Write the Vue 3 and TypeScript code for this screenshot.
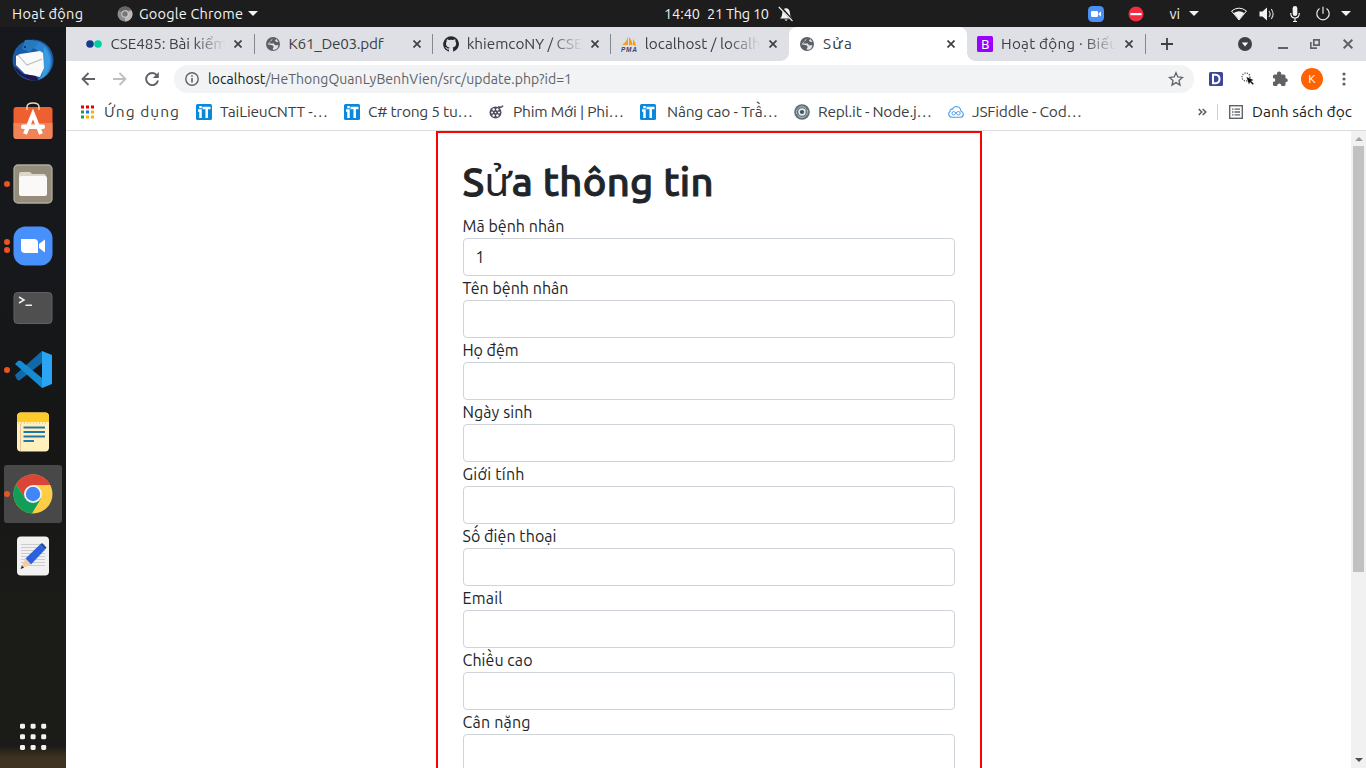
<script setup lang="ts">
import type { Directive } from 'vue'

interface Tab {
  icon: string
  title: string
  width: number
  active?: boolean
  faded?: boolean
}

interface Bookmark {
  icon: string
  title: string
  width: number
  step: number
  wide?: boolean
}

const tabs: Tab[] = [
  { icon: 'dots', title: 'CSE485: Bài kiểm', width: 116, faded: true },
  { icon: 'globe', title: 'K61_De03.pdf', width: 95 },
  { icon: 'github', title: 'khiemcoNY / CSE', width: 116, faded: true },
  { icon: 'pma', title: 'localhost / localh', width: 116, faded: true },
  { icon: 'globe', title: 'Sửa', width: 29, active: true },
  { icon: 'bootstrap', title: 'Hoạt động · Biểu', width: 117, faded: true },
]

const bookmarks: Bookmark[] = [
  { icon: 'apps', title: 'Ứng dụng', width: 75, step: 116 },
  { icon: 'it', title: 'TaiLieuCNTT -…', width: 108, step: 148 },
  { icon: 'it', title: 'C# trong 5 tu…', width: 105, step: 145 },
  { icon: 'film', title: 'Phim Mới | Phi…', width: 111, step: 151 },
  { icon: 'it', title: 'Nâng cao - Trầ…', width: 111, step: 154, wide: true },
  { icon: 'repl', title: 'Repl.it - Node.j…', width: 114, step: 154 },
  { icon: 'fiddle', title: 'JSFiddle - Cod…', width: 110, step: 150 },
]

const fields = [
  { label: 'Mã bệnh nhân', width: 102, value: '1' },
  { label: 'Tên bệnh nhân', width: 106, value: '' },
  { label: 'Họ đệm', width: 56, value: '' },
  { label: 'Ngày sinh', width: 70, value: '' },
  { label: 'Giới tính', width: 62, value: '' },
  { label: 'Số điện thoại', width: 94, value: '' },
  { label: 'Email', width: 40, value: '' },
  { label: 'Chiều cao', width: 70, value: '' },
  { label: 'Cân nặng', width: 68, value: '' },
]

const dock = [
  { icon: 'mail', dots: 0 },
  { icon: 'store', dots: 0 },
  { icon: 'files', dots: 1 },
  { icon: 'zoom', dots: 2 },
  { icon: 'terminal', dots: 0 },
  { icon: 'code', dots: 1 },
  { icon: 'notes', dots: 0 },
  { icon: 'chrome', dots: 1, active: true },
  { icon: 'editor', dots: 0 },
]

// Spreads the tracking so that a label's glyphs span exactly the given width.
const vFit: Directive<HTMLElement, number> = {
  mounted(el, { value }) {
    const natural = el.getBoundingClientRect().width
    const gaps = Array.from(el.textContent ?? '').length - 1
    const spacing = (value - natural) / gaps
    el.style.letterSpacing = `${spacing}px`
    el.style.marginRight = `calc(var(--after, 0px) - ${spacing}px)`
  },
}
</script>

<template>
  <div class="desktop">
    <header class="panel">
      <span v-fit="71" class="t activities">Hoạt động</span>
      <svg class="panel-chrome" width="16" height="16" viewBox="0 0 16 16">
        <circle cx="8" cy="8" r="7.5" fill="#8c8c8c" />
        <path d="M8 8L1.5 4.2A7.5 7.5 0 0 1 14.5 4.3H8z" fill="#666" />
        <path d="M8 8l6.5-3.7A7.5 7.5 0 0 1 8 15.5z" fill="#bbb" />
        <circle cx="8" cy="8" r="3.7" fill="#ccc" />
        <circle cx="8" cy="8" r="2.7" fill="#777" />
      </svg>
      <span v-fit="104" class="t">Google Chrome</span>
      <i class="caret app-caret"></i>
      <div class="clock">
        <span v-fit="36" class="t">14:40</span>
        <span v-fit="62" class="t date">21 Thg 10</span>
        <svg width="16" height="16" viewBox="0 0 16 16">
          <path d="M2 12.5c2-1.5 2-3.500 2.300-6C4.700 3.500 6 2.500 8 2.300c2.500 0 3.600 1.700 3.900 4.200.3 2.500.4 4.500 2.300 6zM6.300 13.500h3.600L8.100 15z" fill="#f2f2f2" />
          <path d="M2 .500L15 15" stroke="#1d1d1d" stroke-width="2.600" />
          <path d="M.800 1L14.500 15" stroke="#f2f2f2" stroke-width="1.100" />
        </svg>
      </div>
      <div class="tray">
        <svg width="16" height="16" viewBox="0 0 16 16">
          <rect width="16" height="16" rx="4.500" fill="#4a90f5" />
          <rect x="3" y="5" width="7" height="6" rx="1.300" fill="#fff" />
          <path d="M10.500 7.500L13 5.500v5l-2.500-2z" fill="#fff" />
        </svg>
        <svg class="busy" width="16" height="16" viewBox="0 0 16 16">
          <circle cx="8" cy="8" r="7.500" fill="#f22c42" />
          <rect x="2.500" y="7" width="11" height="2.200" fill="#fff" />
        </svg>
        <span v-fit="10.500" class="t lang">vi</span>
        <i class="caret lang-caret"></i>
        <svg class="wifi" width="16" height="16" viewBox="0 0 16 16">
          <path d="M.5 5Q8-.7 15.500 5L8 14z" fill="none" stroke="#f2f2f2" stroke-width="1" />
          <path d="M2.700 7Q8 3.500 13.300 7L8 13.700z" fill="#f2f2f2" />
        </svg>
        <svg class="sound" width="16" height="16" viewBox="0 0 16 16">
          <path d="M.5 5.500h3L8 1.500v13l-4.500-4h-3z" fill="#f2f2f2" />
          <path d="M10 5q2.300 3 0 6M12.200 3q3.800 5 0 10" fill="none" stroke="#ccc" stroke-width="1.200" />
        </svg>
        <svg class="mic" width="12" height="16" viewBox="0 0 12 16">
          <rect x="3.700" y="0" width="4.600" height="10" rx="2.300" fill="#f2f2f2" />
          <path d="M1.700 7q0 5 4.300 5t4.300-5M6 12v3.500M4 15.500h4" fill="none" stroke="#f2f2f2" stroke-width="1.200" />
        </svg>
        <svg class="power" width="16" height="16" viewBox="0 0 16 16">
          <path d="M4.500 2.500a6.200 6.200 0 1 0 7 0M8 .8v7" fill="none" stroke="#e8e8e8" stroke-width="1.200" />
        </svg>
        <i class="caret"></i>
      </div>
    </header>

    <div class="workspace">
      <nav class="dock">
        <div v-for="d in dock" :key="d.icon" class="dock-cell" :class="{ selected: d.active }">
          <div class="running"><i v-for="n in d.dots" :key="n"></i></div>
          <svg v-if="d.icon === 'mail'" width="44" height="44" viewBox="0 0 44 44">
            <circle cx="22" cy="22" r="20.500" fill="#1b5ba5" />
            <path d="M13 5Q25-1 36 9l4 8q4 20-15 26 8-6 9-14l-8-17z" fill="#2d83d0" />
            <path d="M14 2q8-1 13 3l-8 9-8-3z" fill="#2579bd" />
            <path d="M33 8q9 12 5 21-2 9-9 12 5-9 3-17z" fill="#3a9be0" />
            <path d="M5 18l4-2 20-3 3 2 1 15-4 9-15-3-9-9z" fill="#fafafa" />
            <path d="M7 17l9 10 15-6" fill="none" stroke="#bdbdbd" stroke-width="1.100" />
            <path d="M3 28q3 10 17 14l8 1-3-5-13-2z" fill="#211653" />
            <circle cx="14" cy="9" r="1" fill="#123" />
          </svg>
          <svg v-else-if="d.icon === 'store'" width="44" height="44" viewBox="0 0 44 44">
            <rect x="2.500" y="7" width="39" height="32" rx="3" fill="#ee6030" />
            <path d="M2.500 23h39v13q0 3-3 3h-33q-3 0-3-3z" fill="#f08458" />
            <path d="M16 10V7q0-4 6-4t6 4v3" fill="none" stroke="#ead9b0" stroke-width="1.500" />
            <path d="M14 34l8-20 8 20" fill="none" stroke="#fff" stroke-width="4" />
            <rect x="10" y="24.500" width="24" height="4.500" rx="2" fill="#fff" />
          </svg>
          <svg v-else-if="d.icon === 'files'" width="44" height="44" viewBox="0 0 44 44">
            <rect x="3" y="3" width="38" height="38" rx="4" fill="#958d7c" stroke="#b2ab9b" stroke-width="1.300" />
            <path d="M8 12q0-2 2-2h9l2 2h12q2 0 2 3v12H8z" fill="#ddd7c9" />
            <rect x="8" y="14" width="28" height="20" rx="2" fill="#faf9f7" />
          </svg>
          <svg v-else-if="d.icon === 'zoom'" width="44" height="44" viewBox="0 0 44 44">
            <rect x="2.500" y="2.500" width="39" height="39" rx="12" fill="#4890fc" />
            <path d="M10 15h13q4 0 4 4v10H14q-4 0-4-4z" fill="#fff" />
            <path d="M28 20l6-4.500v13L28 24z" fill="#fff" />
          </svg>
          <svg v-else-if="d.icon === 'terminal'" width="44" height="44" viewBox="0 0 44 44">
            <rect x="3" y="6.500" width="38" height="31" rx="3.500" fill="#4f4f4f" stroke="#626262" />
            <path d="M8 11l5 3-5 3M14.500 19.300h6.500" fill="none" stroke="#eee" stroke-width="1.500" />
          </svg>
          <svg v-else-if="d.icon === 'code'" width="44" height="44" viewBox="0 0 44 44">
            <path d="M4 27l27-24v12L9 32q-1.500 1-3-.5z" fill="#1269aa" />
            <path d="M4 16l3-3q1-1 3 0l21 17v10z" fill="#168bd2" />
            <path d="M31 3l10 4v29l-10 4z" fill="#2aa5f4" />
          </svg>
          <svg v-else-if="d.icon === 'notes'" width="44" height="44" viewBox="0 0 44 44">
            <rect x="6" y="2.500" width="32" height="39" rx="4" fill="#fff0bd" />
            <path d="M6 12V7q0-4.500 4-4.500h24q4 0 4 4.500v5z" fill="#fdca2c" />
            <path d="M9.500 14v27" stroke="#f1c39a" />
            <path d="M7 13h30" stroke="#e0ba4a" stroke-dasharray="1 2" />
            <path d="M12.500 17.500H34M12.500 22H34M12.500 26.500H34M12.500 31H23" stroke="#2275a7" stroke-width="1.900" />
          </svg>
          <svg v-else-if="d.icon === 'chrome'" width="44" height="44" viewBox="0 0 44 44">
            <circle cx="22" cy="22" r="19.500" fill="#fdce45" />
            <path d="M22 13H39.400A19.500 19.500 0 0 0 5.100 12.300L14.200 26.500z" fill="#db4437" />
            <path d="M5.100 12.300A19.500 19.500 0 0 0 21 41.500L30 26.500 14.200 26.500z" fill="#129d59" />
            <circle cx="22" cy="22" r="9" fill="#f1f1f1" />
            <circle cx="22" cy="22" r="7.200" fill="#4285f4" />
          </svg>
          <svg v-else width="44" height="44" viewBox="0 0 44 44">
            <rect x="6" y="2.500" width="32" height="39" rx="4" fill="#f1f1f1" />
            <path d="M10 10.500h24M10 13.500h24M10 16.500h24M10 19.500h24M10 22.500h24M10 25.500h24M10 28.500h24M10 31.500h24" stroke="#ccc" />
            <path d="M14.500 24.500L29 10.500l5 5-14 15z" fill="#2c61dd" />
            <path d="M14.500 24.500l5.500 6-10 4z" fill="#f5cba7" />
            <path d="M11 31.500l2 2.300-3.500 1.200z" fill="#222" />
            <path d="M29 10.500l2-1.500 4.500 4.500-1.500 2z" fill="#1b49a8" />
          </svg>
        </div>
        <svg class="launcher" width="28" height="28" viewBox="0 0 28 28">
          <g v-for="r in 3" :key="r">
            <rect v-for="c in 3" :key="c" :x="c * 10.600 - 9.600" :y="r * 10.600 - 9.900" width="5" height="5" rx="1.400" fill="#f3f3ee" />
          </g>
        </svg>
      </nav>

      <main class="browser">
        <div class="tabstrip">
          <div v-for="(tab, i) in tabs" :key="i" class="tab" :class="{ active: tab.active, divided: [0, 1, 2, 5].includes(i) }">
            <svg v-if="tab.icon === 'dots'" width="16" height="16" viewBox="0 0 16 16">
              <circle cx="4" cy="8" r="3.800" fill="#173b8c" />
              <circle cx="12" cy="8" r="3.800" fill="#00cfa2" />
            </svg>
            <svg v-else-if="tab.icon === 'globe'" width="16" height="16" viewBox="0 0 16 16">
              <circle cx="8" cy="8" r="7" fill="#5b6066" />
              <path d="M7.500 2.500q0 2.300-2 2.800L4 7.500h4.800l1.200 1.800q3 .2 3.300-.500.2 3.200-2.800 4.800-1.800.3-2.800-.2 0-1.400 1.200-2.400L7.500 9.300 2.600 8.200M11 2.500q.1 1.300-1 2l1 1.300 2.500.2" fill="#e4e5e8" />
            </svg>
            <svg v-else-if="tab.icon === 'github'" width="16" height="16" viewBox="0 0 16 16">
              <path d="M8 .3a7.800 7.800 0 0 0-2.500 15.200c.4.100.5-.2.500-.4v-1.500c-2.200.5-2.600-1-2.600-1-.4-.9-.9-1.200-.9-1.200-.7-.5.100-.5.100-.5.800.1 1.200.8 1.200.8.700 1.200 1.900.9 2.300.7.1-.5.300-.9.500-1.100-1.800-.2-3.600-.9-3.600-3.900 0-.9.300-1.600.8-2.100-.1-.2-.4-1 .1-2.100 0 0 .7-.2 2.200.8a7.300 7.300 0 0 1 3.900 0c1.500-1 2.200-.8 2.200-.8.400 1.100.2 1.900.1 2.100.5.500.8 1.200.8 2.100 0 3-1.800 3.700-3.600 3.900.3.300.6.800.6 1.500v2.300c0 .2.100.5.500.4A7.800 7.800 0 0 0 8 .3z" fill="#24292e" />
            </svg>
            <svg v-else-if="tab.icon === 'pma'" width="16" height="16" viewBox="0 0 16 16">
              <path d="M7 0v9H1q5-3 6-9zM8 1q3 3 3.500 8H8zM12 3q2 2 3 7l-3-1z" fill="#f99b1b" />
              <text x="0" y="15.500" textLength="16" font-size="6.500" font-weight="700" font-style="italic" font-family="Liberation Sans, sans-serif" fill="#454078">PMA</text>
            </svg>
            <svg v-else width="16" height="16" viewBox="0 0 16 16">
              <rect width="16" height="16" rx="1.500" fill="#9a00ff" />
              <text x="4" y="12.700" font-size="13" font-family="Noto Sans, sans-serif" fill="#fff">B</text>
            </svg>
            <div class="tab-title" :class="{ faded: tab.faded }"><span v-fit="tab.width" class="t">{{ tab.title }}</span></div>
            <svg class="tab-close" width="8" height="8" viewBox="0 0 8 8"><path d="M.500.500l7 7M7.500.500l-7 7" stroke="#3c4043" stroke-width="1.700" /></svg>
          </div>
          <svg class="plus" width="12" height="12" viewBox="0 0 12 12"><path d="M6 0v12M0 6h12" stroke="#3c4043" stroke-width="1.800" /></svg>
          <div class="window-controls">
            <svg width="14" height="14" viewBox="0 0 14 14"><circle cx="7" cy="7" r="7" fill="#3c4043" /><path d="M3.800 5.500h6.400L7 9.500z" fill="#fff" /></svg>
            <svg class="minimise" width="10" height="12" viewBox="0 0 10 12"><path d="M0 10h10" stroke="#5f6368" stroke-width="2" /></svg>
            <svg class="restore" width="10" height="10" viewBox="0 0 10 10"><path d="M3.800.800h5.400v5.400H3.800zM.800 3v6.200H7" fill="none" stroke="#5f6368" stroke-width="1.700" /></svg>
            <svg class="shut" width="10" height="10" viewBox="0 0 10 10"><path d="M.700.700l8.600 8.600M9.300.700L.700 9.300" stroke="#5f6368" stroke-width="2" /></svg>
          </div>
        </div>

        <div class="toolbar">
          <svg class="back" width="14" height="14" viewBox="0 0 14 14"><path d="M14 7H1.500M7.500 1L1.500 7l6 6" fill="none" stroke="#5f6368" stroke-width="1.800" /></svg>
          <svg class="forward" width="14" height="14" viewBox="0 0 14 14"><path d="M0 7h12.500M6.500 1l6 6-6 6" fill="none" stroke="#bcbec1" stroke-width="1.800" /></svg>
          <svg class="reload" width="14" height="14" viewBox="0 0 14 14"><path d="M12 3.500A6 6 0 1 0 13 8.500" fill="none" stroke="#5f6368" stroke-width="1.900" /><path d="M13.800 0v6H7.800z" fill="#5f6368" /></svg>
          <div class="omnibox">
            <svg width="14" height="14" viewBox="0 0 14 14"><circle cx="7" cy="7" r="6.200" fill="none" stroke="#5f6368" stroke-width="1.400" /><path d="M7 6v4.500M7 3.300v1.500" stroke="#5f6368" stroke-width="1.600" /></svg>
            <span v-fit="364" class="t url"><b>localhost</b>/HeThongQuanLyBenhVien/src/update.php?id=1</span>
            <svg class="star" width="16" height="16" viewBox="0 0 16 16"><path d="M8 1.700l1.800 4.300 4.700.4-3.500 3.100 1 4.600-4-2.500-4 2.500 1-4.600L1.500 6.400 6.200 6z" fill="none" stroke="#5f6368" stroke-width="1.300" /></svg>
          </div>
          <div class="extensions">
            <svg width="14" height="14" viewBox="0 0 14 14"><rect width="14" height="14" rx="1.500" fill="#3c4795" /><path d="M4 2.800h2.700q3.800.3 3.800 4.200T6.700 11.200H4z" fill="none" stroke="#fff" stroke-width="2" /></svg>
            <svg class="pointer" width="14" height="14" viewBox="0 0 14 14"><circle cx="5" cy="5" r="4" fill="none" stroke="#555" stroke-width="1.300" stroke-dasharray="1.200 1.200" /><path d="M5.500 5l7 3-2.500 1 2.800 2.800-1 1-2.800-2.800-1 2.500z" fill="#111" /></svg>
            <svg class="puzzle" width="16" height="16" viewBox="0 0 16 16"><path d="M1 5q0-1.500 1.500-1.500H5q-.3-3 2.100-3T9.200 3.500H12q1.500 0 1.500 1.500v2.300q2.300-.1 2.300 2t-2.300 2V13.500q0 1.500-1.500 1.500H9.500q0-2.600-2.200-2.600T5.100 15H2.500Q1 15 1 13.500V11q2.300 0 2.300-2T1 7z" fill="#5f6368" /></svg>
            <span class="avatar">K</span>
            <svg class="kebab" width="4" height="14" viewBox="0 0 4 14"><g fill="#5f6368"><circle cx="2" cy="2" r="1.600" /><circle cx="2" cy="7" r="1.600" /><circle cx="2" cy="12" r="1.600" /></g></svg>
          </div>
        </div>

        <div class="bookmarks">
          <div v-for="(b, i) in bookmarks" :key="i" class="bookmark" :class="{ wide: b.wide }" :style="{ width: b.step + 'px' }">
            <svg v-if="b.icon === 'apps'" class="apps" width="14" height="14" viewBox="0 0 14 14">
              <path d="M0 2h13" stroke="#e60000" stroke-width="3" stroke-dasharray="3 2" />
              <path d="M0 7h3M0 12h3" stroke="#16a048" stroke-width="3" />
              <path d="M5 7h3" stroke="#1a73e8" stroke-width="3" />
              <path d="M10 7h3M5 12h3M10 12h3" stroke="#fbb404" stroke-width="3" />
            </svg>
            <svg v-else-if="b.icon === 'it'" width="16" height="16" viewBox="0 0 16 16">
              <rect width="16" height="16" rx="1.500" fill="#0988dc" />
              <path d="M2 6.500h2.500V14M4.500 2v2.300M6.500 4h8M10.700 4v10" fill="none" stroke="#fff" stroke-width="2.500" />
            </svg>
            <svg v-else-if="b.icon === 'film'" width="16" height="16" viewBox="0 0 16 16">
              <circle cx="6.500" cy="8.500" r="6" fill="#4d4d60" />
              <path d="M9 2.700q3.500 1.500 5-1" fill="none" stroke="#4d4d60" stroke-width="1.500" />
              <g fill="#fff"><circle cx="4.600" cy="5.500" r="1.200" /><circle cx="8.400" cy="5.500" r="1.200" /><circle cx="3" cy="8.500" r="1" /><circle cx="6.500" cy="8.500" r=".8" /><circle cx="10" cy="8.500" r="1" /><circle cx="4.600" cy="11.500" r="1.200" /><circle cx="8.400" cy="11.500" r="1.200" /></g>
            </svg>
            <svg v-else-if="b.icon === 'repl'" width="16" height="16" viewBox="0 0 16 16">
              <circle cx="8" cy="8" r="7.800" fill="#607079" />
              <path d="M2.500 10A6 6 0 0 1 8 2.500q4 0 4.500 4M13.500 6A6 6 0 0 1 8 13.500q-4 0-4.500-3" fill="none" stroke="#b9c4c8" stroke-width=".9" />
              <circle cx="8" cy="8" r="2.900" fill="#455059" stroke="#e6eaec" stroke-width="1.600" />
            </svg>
            <svg v-else width="16" height="16" viewBox="0 0 16 16">
              <path d="M4 13.300h8.500q3-.4 2.800-3.300-.1-2.300-2.300-2.800Q12.500 2.700 8.500 2.500 5.600 2.500 4.300 5.200 2 4.700 2 7.500.6 8.300.7 10q.2 3 3.300 3.300z" fill="#fff" stroke="#4a9bea" stroke-width="1.100" />
              <path d="M8 9q1.300-1.700 2.700-1.500 1.600.3 1.500 1.900Q12 11 10.500 11 9.300 11 8 9.300 6.700 7.500 5.500 7.500 4 7.700 4 9.300 4.100 11 5.500 11 6.800 11 8 9" fill="none" stroke="#4a9bea" />
            </svg>
            <span v-fit="b.width" class="t">{{ b.title }}</span>
          </div>
          <div class="reading">
            <svg width="9" height="8" viewBox="0 0 9 8"><path d="M.700 1l3 3-3 3M4.700 1l3 3-3 3" fill="none" stroke="#5f6368" stroke-width="1.700" /></svg>
            <i class="rule"></i>
            <svg width="14" height="14" viewBox="0 0 14 14"><rect x=".7" y=".7" width="12.600" height="12.600" fill="none" stroke="#5f6368" stroke-width="1.400" /><path d="M3 4.200h1.500M3 7h1.500M3 9.800h1.500M5.500 4.200H11M5.500 7H11M5.500 9.800H11" stroke="#5f6368" stroke-width="1.300" /></svg>
            <span v-fit="100" class="t">Danh sách đọc</span>
          </div>
        </div>

        <div class="viewport">
          <div class="page">
            <form class="card" @submit.prevent>
              <h1><span v-fit="251">S<em>ử</em>a thông tin</span></h1>
              <template v-for="f in fields" :key="f.label">
                <label><span v-fit="f.width" class="t">{{ f.label }}</span></label>
                <input type="text" :value="f.value" />
              </template>
            </form>
          </div>
          <div class="scrollbar">
            <i class="arrow up"></i>
            <i class="thumb"></i>
            <i class="arrow down"></i>
          </div>
        </div>
      </main>
    </div>
  </div>
</template>

<style>
body {
  margin: 0;
  overflow: hidden;
}
</style>

<style scoped>
* {
  box-sizing: border-box;
}
svg {
  display: block;
  flex: none;
}
.t {
  display: inline-block;
  white-space: pre;
  flex: none;
}
.desktop {
  width: 1366px;
  height: 768px;
  overflow: hidden;
  display: flex;
  flex-direction: column;
  font-family: Ubuntu, "Noto Sans", sans-serif;
  color: #3c4043;
}
.panel {
  height: 27px;
  flex: none;
  background: #1d1d1d;
  color: #f2f2f2;
  display: flex;
  align-items: center;
  padding-left: 12px;
  font-size: 14.500px;
  line-height: 26px;
}
.panel-chrome {
  margin-left: 34px;
}
.panel-chrome + .t {
  margin-left: 6px;
}
.caret {
  flex: none;
  border: 5px solid transparent;
  border-top-color: #f2f2f2;
  border-bottom: 0;
}
.app-caret {
  margin-left: 5px;
}
.clock {
  display: flex;
  align-items: center;
  margin-left: 406px;
}
.date {
  --after: 9px;
  margin-left: 7px;
}
.tray {
  margin-left: auto;
  padding-right: 15px;
  display: flex;
  align-items: center;
}
.busy {
  margin-left: 24px;
}
.lang {
  margin-left: 26px;
}
.lang-caret {
  margin-left: 9px;
}
.wifi {
  margin-left: 32px;
}
.sound {
  margin-left: 12px;
}
.mic {
  margin-left: 14px;
}
.power {
  margin: 0 10px 0 14px;
}
.workspace {
  flex: 1;
  min-height: 0;
  display: flex;
}
.dock {
  width: 66px;
  flex: none;
  padding-top: 2px;
  display: flex;
  flex-direction: column;
  background: linear-gradient(#17181d 0, #16181b 32%, #151615 55%, #1b1c18 80%, #1c1b19 97%, #3d3120 98.500%, #40321e);
}
.dock-cell {
  height: 58px;
  margin: 2px 4px;
  padding-right: 7px;
  display: flex;
  flex: none;
  align-items: center;
  justify-content: space-between;
  border-radius: 3px;
}
.dock-cell.selected {
  background: #484848;
}
.running {
  width: 6px;
  display: grid;
  gap: 2px;
}
.running i {
  width: 6px;
  height: 6px;
  border-radius: 50%;
  background: #e95420;
}
.launcher {
  margin: auto 0 17px 19px;
}
.browser {
  flex: 1;
  min-width: 0;
  display: flex;
  flex-direction: column;
  background: #fff;
}
.tabstrip {
  height: 34px;
  flex: none;
  background: #dee0e5;
  display: flex;
  align-items: center;
  padding-left: 10px;
}
.tab {
  position: relative;
  width: 178.150px;
  height: 34px;
  flex: none;
  display: flex;
  align-items: center;
  padding-left: 10.400px;
  font-size: 15.300px;
  line-height: 32px;
}
.tab.divided::after {
  content: "";
  position: absolute;
  right: -1px;
  top: 7px;
  width: 1px;
  height: 20px;
  background: #85888d;
}
.tab.active {
  background: #fff;
  border-radius: 8px 8px 0 0;
}
.tab.active::before,
.tab.active::after {
  content: "";
  position: absolute;
  bottom: 0;
  width: 8px;
  height: 8px;
}
.tab.active::before {
  left: -8px;
  background: radial-gradient(circle at 0 0, transparent 7.500px, #fff 8px);
}
.tab.active::after {
  right: -8px;
  background: radial-gradient(circle at 100% 0, transparent 7.500px, #fff 8px);
}
.tab-title {
  width: 119px;
  margin-left: 8px;
  white-space: nowrap;
}
.faded {
  mask-image: linear-gradient(90deg, #000 70%, transparent 97%);
}
.tab-close {
  margin-left: 5px;
}
.plus {
  margin-left: 16px;
}
.window-controls {
  margin-left: auto;
  padding-right: 13px;
  display: flex;
  align-items: center;
}
.minimise {
  margin-left: 26px;
}
.restore {
  margin-left: 22px;
}
.shut {
  margin-left: 23px;
}
.toolbar {
  height: 36px;
  flex: none;
  display: flex;
  align-items: center;
  padding-left: 15px;
}
.forward {
  margin-left: 18px;
}
.reload {
  margin-left: 18px;
}
.omnibox {
  width: 1020px;
  height: 28px;
  margin-left: 15px;
  border-radius: 14px;
  background: #f1f3f4;
  display: flex;
  align-items: center;
  padding: 0 10px 0 11px;
}
.url {
  margin-left: 9px;
  font-size: 14px;
  line-height: 28px;
  color: #5f6368;
}
.url b {
  font-weight: 400;
  color: #202124;
}
.star {
  margin-left: auto;
}
.extensions {
  display: flex;
  align-items: center;
  margin-left: 15px;
}
.pointer {
  margin-left: 18px;
}
.puzzle {
  margin-left: 17px;
}
.avatar {
  width: 22px;
  height: 22px;
  margin-left: 13px;
  border-radius: 50%;
  background: #ff6300;
  color: #fff;
  font-size: 12px;
  line-height: 22px;
  text-align: center;
}
.kebab {
  margin-left: 19px;
}
.bookmarks {
  height: 34px;
  flex: none;
  padding-left: 14px;
  border-bottom: 1px solid #dadce0;
  display: flex;
  font-size: 15.500px;
  line-height: 28px;
}
.bookmark {
  flex: none;
  height: 30px;
  display: flex;
  align-items: center;
  gap: 8px;
}
.bookmark.wide {
  gap: 11px;
}
.apps {
  margin: 0 1px;
}
.reading {
  margin-left: auto;
  padding-right: 14px;
  height: 30px;
  display: flex;
  align-items: center;
  color: #202124;
}
.rule {
  width: 1px;
  height: 16px;
  margin: 0 11px 0 10px;
  background: #cfd1d4;
}
.reading .t {
  margin-left: 9px;
}
.viewport {
  flex: 1;
  min-height: 0;
  display: flex;
}
.page {
  flex: 1;
  overflow: hidden;
  display: flex;
  justify-content: center;
  align-items: flex-start;
}
.card {
  width: 546px;
  border: 2px solid #f00;
  padding: 25px 25px 60px;
  color: #212529;
  font-size: 16px;
  line-height: 24px;
}
h1 {
  margin: 0 0 8px;
  font-size: 40px;
  line-height: 48px;
  font-weight: 500;
  -webkit-text-stroke: 1px #212529;
}
h1 span {
  display: inline-block;
  white-space: pre;
}
h1 em {
  font-style: normal;
  font-weight: 400;
  -webkit-text-stroke: 0;
}
label {
  display: block;
  height: 24px;
}
input {
  display: block;
  width: 100%;
  height: 38px;
  padding: 6px 12px;
  border: 1px solid #ced4da;
  border-radius: 4px;
  background: #fff;
  color: #212529;
  font: inherit;
  outline: none;
}
.scrollbar {
  width: 15px;
  background: #f1f1f1;
  display: flex;
  flex-direction: column;
  align-items: center;
}
.arrow {
  border: 4px solid transparent;
}
.arrow.up {
  margin: 6px 0 5px;
  border-top: 0;
  border-bottom-color: #a3a3a3;
}
.arrow.down {
  margin: auto 0 6px;
  border-bottom: 0;
  border-top-color: #505050;
}
.thumb {
  width: 11px;
  height: 426px;
  background: #c1c1c1;
}
</style>
